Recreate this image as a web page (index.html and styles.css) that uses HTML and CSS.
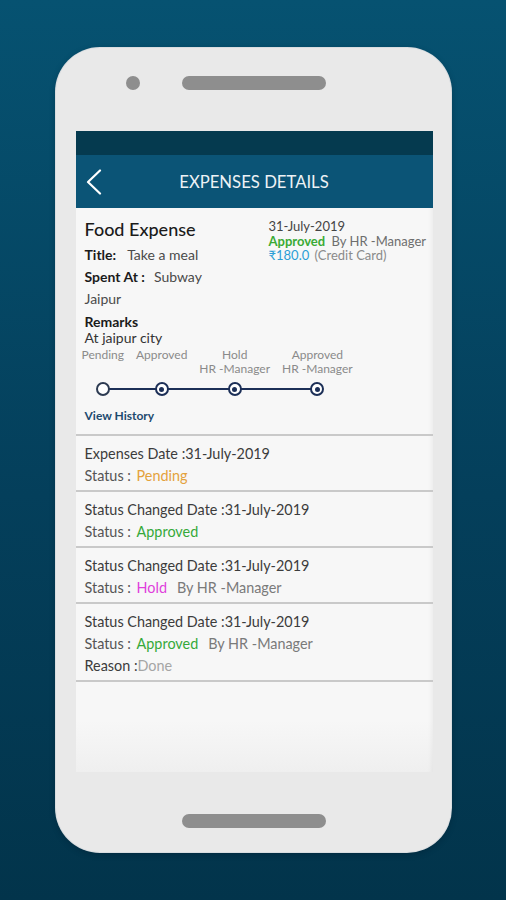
FILE: index.html
```html
<!DOCTYPE html>
<html>
<head>
	<title>Expenses Details</title>
	<meta charset="utf-8">
	<meta name="viewport" content="width=device-width,user-scalable=no,initial-scale=1.0">
	<link rel="stylesheet" href="styles.css">
</head>
<body>
<div class="phone">
	<div class="phone-top">
		<span class="camera"></span>
		<span class="speaker"></span>
	</div>

	<div class="screen">
		<div class="status-bar"></div>
		<div class="toolbar">
			<svg class="back" width="16" height="26" viewBox="0 0 16 26">
				<polyline points="14,1.5 2,13 14,24.5" fill="none" stroke="#fff" stroke-width="2.2" stroke-linecap="round" stroke-linejoin="round"/>
			</svg>
			<h1 class="title">EXPENSES DETAILS</h1>
		</div>

		<!-- 详情 -->
		<div class="detail">
			<div class="detail-top">
				<div class="detail-left">
					<div class="expense-name">Food Expense</div>
					<div class="field"><b>Title:</b><span class="val">Take a meal</span></div>
					<div class="field"><b class="spent">Spent At :</b><span class="val">Subway</span></div>
					<div class="field"><span class="val city">Jaipur</span></div>
					<div class="remarks">Remarks</div>
					<div class="remarks-text">At jaipur city</div>
				</div>
				<div class="detail-right">
					<div class="date">31-July-2019</div>
					<div><span class="approved">Approved</span> <span class="muted">By HR -Manager</span></div>
					<div><span class="amount">₹180.0</span> <span class="light">(Credit Card)</span></div>
				</div>
			</div>

			<!-- 进度 -->
			<div class="stepper">
				<div class="step first">
					<div class="step-label">Pending<br>&nbsp;</div>
					<div class="step-track"><span class="node empty"></span></div>
				</div>
				<div class="step">
					<div class="step-label">Approved<br>&nbsp;</div>
					<div class="step-track"><span class="node"></span></div>
				</div>
				<div class="step">
					<div class="step-label">Hold<br>HR -Manager</div>
					<div class="step-track"><span class="node"></span></div>
				</div>
				<div class="step last">
					<div class="step-label">Approved<br>HR -Manager</div>
					<div class="step-track"><span class="node"></span></div>
				</div>
			</div>
			<div class="history-link">View History</div>
		</div>

		<!-- 历史 -->
		<div class="history">
			<div class="history-item">
				<div class="line">Expenses Date :31-July-2019</div>
				<div class="line"><span class="label">Status :</span> <span class="pending">Pending</span></div>
			</div>
			<div class="history-item">
				<div class="line">Status Changed Date :31-July-2019</div>
				<div class="line"><span class="label">Status :</span> <span class="approved-2">Approved</span></div>
			</div>
			<div class="history-item">
				<div class="line">Status Changed Date :31-July-2019</div>
				<div class="line"><span class="label">Status :</span> <span class="hold">Hold</span><span class="by">By HR -Manager</span></div>
			</div>
			<div class="history-item">
				<div class="line">Status Changed Date :31-July-2019</div>
				<div class="line"><span class="label">Status :</span> <span class="approved-2">Approved</span><span class="by">By HR -Manager</span></div>
				<div class="line">Reason :<span class="reason">Done</span></div>
			</div>
		</div>
	</div>

	<div class="phone-bottom">
		<span class="speaker"></span>
	</div>
</div>
</body>
</html>
```

FILE: styles.css
```css
html, body {
	margin: 0;
	padding: 0;
}
body {
	width: 506px;
	height: 900px;
	overflow: hidden;
	background: linear-gradient(180deg, #065271 0%, #043f5b 55%, #02344b 100%);
	font-family: Lato, "Open Sans", sans-serif;
}

.phone {
	width: 395px;
	height: 804px;
	margin: 48px 0 0 56px;
	border-radius: 44px;
	background: #e9e9e9;
	box-shadow: 0 0 0 1px #d9dde0, 0 2px 6px rgba(0, 20, 35, 0.35);
	display: flex;
	flex-direction: column;
	align-items: center;
}
.phone-top {
	height: 83px;
	width: 100%;
	box-sizing: border-box;
	display: flex;
	align-items: flex-start;
	padding: 28px 0 0 70px;
}
.camera {
	width: 14px;
	height: 14px;
	border-radius: 50%;
	background: #8e8e8e;
	margin-right: 42px;
}
.speaker {
	display: block;
	width: 144px;
	height: 14px;
	border-radius: 7px;
	background: #8e8e8e;
}
.phone-bottom {
	flex: 1;
	padding-top: 42px;
	box-sizing: border-box;
}

.screen {
	width: 357px;
	height: 641px;
	margin-left: 1px;
	background: linear-gradient(180deg, #f7f7f7 0%, #f7f7f7 92%, #efefef 100%);
	box-shadow: inset -6px 0 6px -6px rgba(0, 0, 0, 0.08);
	display: flex;
	flex-direction: column;
}
.status-bar {
	height: 24px;
	background: #053a4f;
}
.toolbar {
	height: 53px;
	background: #0b5476;
	display: flex;
	align-items: center;
	justify-content: center;
	position: relative;
}
.toolbar .back {
	position: absolute;
	left: 10px;
	top: 14px;
}
.title {
	margin: 0;
	font-size: 16.7px;
	font-weight: 400;
	color: #edf2f5;
}

.detail {
	padding: 10px 0 10px 0;
	border-bottom: 2px solid #c9c9c9;
}
.detail-top {
	display: flex;
	padding-left: 9px;
}
.detail-left {
	width: 184px;
}
.expense-name {
	font-size: 18px;
	line-height: 22px;
	font-weight: 500;
	color: #1b1b1b;
	margin-bottom: 4px;
}
.field {
	font-size: 14px;
	line-height: 22px;
	color: #1b1b1b;
}
.field b {
	font-weight: 700;
	margin-right: 11px;
}
.field b.spent {
	margin-right: 9px;
}
.field .val {
	color: #4a4a4a;
}
.remarks {
	margin-top: 4px;
	font-size: 14px;
	line-height: 16px;
	font-weight: 700;
	color: #1b1b1b;
}
.remarks-text {
	font-size: 14px;
	line-height: 16px;
	color: #333;
}
.detail-right {
	font-size: 13px;
	line-height: 14.5px;
	color: #555;
	padding-top: 1px;
	white-space: nowrap;
}
.detail-right .date {
	color: #444;
}
.approved {
	color: #3aaa35;
	font-weight: 700;
}
.muted {
	color: #6e6e6e;
	margin-left: 3px;
}
.amount {
	color: #2b9ed6;
}
.light {
	color: #8a8a8a;
	margin-left: 2px;
}

.stepper {
	display: flex;
	margin-top: 2px;
}
.step {
	padding: 0 6px;
	display: flex;
	flex-direction: column;
	align-items: center;
}
.step-label {
	font-size: 12px;
	line-height: 14px;
	color: #8a8a8a;
	text-align: center;
	white-space: nowrap;
}
.step-track {
	position: relative;
	align-self: stretch;
	height: 14px;
	margin-top: 6px;
	display: flex;
	justify-content: center;
}
.step-track:before,
.step-track:after {
	content: '';
	position: absolute;
	top: 6px;
	height: 2px;
	background: #1c2f57;
}
.step-track:before {
	left: -6px;
	right: 50%;
}
.step-track:after {
	left: 50%;
	right: -6px;
}
.first .step-track:before,
.last .step-track:after {
	display: none;
}
.node {
	position: relative;
	z-index: 1;
	width: 10px;
	height: 10px;
	border: 2px solid #1c2f57;
	border-radius: 50%;
	background: #fff;
	display: flex;
	align-items: center;
	justify-content: center;
}
.node:after {
	content: '';
	width: 5px;
	height: 5px;
	border-radius: 50%;
	background: #1c2f57;
}
.node.empty {
	border-color: #2d3b52;
}
.node.empty:after {
	display: none;
}
.history-link {
	margin: 12px 0 0 9px;
	font-size: 12px;
	line-height: 16px;
	font-weight: 700;
	color: #1d4a6e;
}

.history-item {
	padding: 7px 0 3px 9px;
	border-bottom: 2px solid #c9c9c9;
}
.line {
	font-size: 14.4px;
	line-height: 22px;
	color: #3c3c3c;
}
.label {
	color: #555;
}
.pending {
	color: #e4a23c;
	margin-left: 2px;
}
.approved-2 {
	color: #35a93a;
	margin-left: 2px;
}
.hold {
	color: #df3fdc;
	margin-left: 2px;
}
.by {
	color: #7a7a7a;
	margin-left: 10px;
}
.reason {
	color: #a5a5a5;
}
```
